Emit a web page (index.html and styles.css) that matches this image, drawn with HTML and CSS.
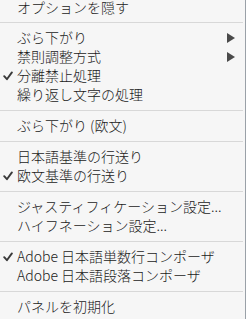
FILE: index.html
```html
<!DOCTYPE html>
<html lang="ja">
<head>
<meta charset="utf-8">
<link rel="stylesheet" href="styles.css">
</head>
<body>
<div class="menu">
  <div class="item first"><span class="label">オプションを隠す</span></div>
  <div class="sep"></div>
  <div class="item"><span class="label">ぶら下がり</span><span class="arrow"></span></div>
  <div class="item"><span class="label">禁則調整方式</span><span class="arrow"></span></div>
  <div class="item"><span class="check"><svg viewBox="0 0 10 10" width="10" height="10"><path d="M1.2 5.2 L3.9 8.2 L8.9 1.4" fill="none" stroke="#3a3a3a" stroke-width="1.9" stroke-linecap="round" stroke-linejoin="round"/></svg></span><span class="label">分離禁止処理</span></div>
  <div class="item"><span class="label">繰り返し文字の処理</span></div>
  <div class="sep"></div>
  <div class="item"><span class="label">ぶら下がり (欧文)</span></div>
  <div class="sep"></div>
  <div class="item"><span class="label">日本語基準の行送り</span></div>
  <div class="item"><span class="check"><svg viewBox="0 0 10 10" width="10" height="10"><path d="M1.2 5.2 L3.9 8.2 L8.9 1.4" fill="none" stroke="#3a3a3a" stroke-width="1.9" stroke-linecap="round" stroke-linejoin="round"/></svg></span><span class="label">欧文基準の行送り</span></div>
  <div class="sep"></div>
  <div class="item"><span class="label">ジャスティフィケーション設定...</span></div>
  <div class="item"><span class="label">ハイフネーション設定...</span></div>
  <div class="sep"></div>
  <div class="item"><span class="check"><svg viewBox="0 0 10 10" width="10" height="10"><path d="M1.2 5.2 L3.9 8.2 L8.9 1.4" fill="none" stroke="#3a3a3a" stroke-width="1.9" stroke-linecap="round" stroke-linejoin="round"/></svg></span><span class="label">Adobe 日本語単数行コンポーザ</span></div>
  <div class="item"><span class="label">Adobe 日本語段落コンポーザ</span></div>
  <div class="sep"></div>
  <div class="item"><span class="label">パネルを初期化</span></div>
</div>
</body>
</html>
```

FILE: styles.css
```css
html, body {
  margin: 0;
  padding: 0;
}
body {
  background: #9aa1a8;
  width: 246px;
  height: 319px;
  overflow: hidden;
}
.menu {
  width: 245px;
  padding-bottom: 10px;
  background: #f6f6f6;
  font-family: "Noto Sans CJK JP", "Noto Sans", sans-serif;
  font-size: 14px;
  font-weight: 300;
  color: #1a1a1a;
}
.item {
  display: grid;
  grid-template-columns: 17px 1fr 19px;
  align-items: center;
  height: 19px;
  line-height: 19px;
}
.item.first {
  height: 16px;
  line-height: 16px;
  align-items: start;
}
.label {
  grid-column: 2;
  white-space: nowrap;
}
.first .label {
  line-height: 14px;
}
.check {
  grid-column: 1;
  grid-row: 1;
  display: flex;
  justify-content: flex-start;
  padding-left: 3px;
  padding-top: 1px;
}
.check svg {
  display: block;
}
.arrow {
  grid-column: 3;
  grid-row: 1;
  width: 0;
  height: 0;
  border-left: 8px solid #4a4a4a;
  border-top: 5px solid transparent;
  border-bottom: 5px solid transparent;
  margin-left: 1px;
}
.sep {
  height: 1px;
  margin: 6px 2px 5px 0;
  background: #d8d8d8;
}
```
